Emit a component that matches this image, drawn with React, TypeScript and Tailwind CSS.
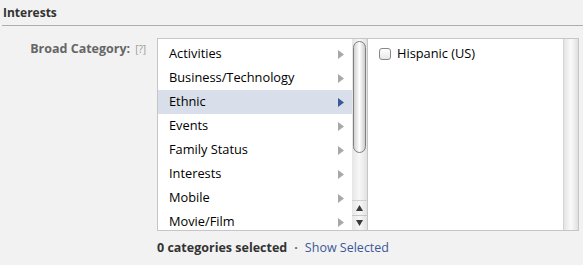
const categories = [
  'Activities',
  'Business/Technology',
  'Ethnic',
  'Events',
  'Family Status',
  'Interests',
  'Mobile',
  'Movie/Film',
]

function Arrow({ active }: { active: boolean }) {
  return (
    <svg width="6" height="9" viewBox="0 0 6 9" className={active ? 'text-[#3b5998]' : 'text-[#a8a8a8]'}>
      <path d="M0 0 L6 4.5 L0 9 Z" fill="currentColor" />
    </svg>
  )
}

function CategoryList() {
  return (
    <div className="w-[194px] h-full overflow-hidden pt-[3px]">
      {categories.map(name => {
        const active = name === 'Ethnic'
        return (
          <div
            key={name}
            className={`h-[24px] flex items-center justify-between pl-[11px] pr-[8px] text-[12.8px] text-black ${active ? 'bg-[#d8dfea]' : ''}`}
          >
            <span>{name}</span>
            <Arrow active={active} />
          </div>
        )
      })}
    </div>
  )
}

function ListScrollbar() {
  return (
    <div className="w-[16px] h-full flex flex-col bg-gradient-to-r from-[#e6e6e6] via-[#f7f7f7] to-[#e2e2e2] border-r border-[#c6c6c6]">
      <div className="flex-1 pt-[2px] px-[1px]">
        <div className="h-[112px] rounded-full border border-[#7f7f7f] bg-gradient-to-r from-[#d2d2d2] via-white to-[#cccccc]" />
      </div>
      <div className="h-[15px] flex items-center justify-center border-t border-[#d0d0d0]">
        <svg width="7" height="6" viewBox="0 0 7 6">
          <path d="M3.5 0 L7 6 L0 6 Z" fill="#3a3a3a" />
        </svg>
      </div>
      <div className="h-[15px] flex items-center justify-center border-t border-[#c8c8c8]">
        <svg width="7" height="6" viewBox="0 0 7 6">
          <path d="M0 0 L7 0 L3.5 6 Z" fill="#3a3a3a" />
        </svg>
      </div>
    </div>
  )
}

export default function App() {
  return (
    <div className="w-[583px] h-[265px] bg-[#f2f2f2] font-['Lucida_Grande','Open_Sans',sans-serif] overflow-hidden">
      <div className="pl-[3px] pt-[4px] h-[25px] text-[12px] font-bold text-[#333]">Interests</div>
      <div className="ml-[2px] h-px bg-[#adadad]" />

      <div className="flex mt-[12px]">
        <div className="w-[157px] flex justify-end items-start pr-[11px] pt-[2px]">
          <span className="text-[12.5px] font-bold text-[#666]">Broad Category:</span>
          <span className="ml-[5px] text-[10px] text-[#999] pt-[2px]">[?]</span>
        </div>

        <div>
          <div className="w-[422px] h-[193px] border border-[#c6c6c6] bg-white flex">
            <CategoryList />
            <ListScrollbar />
            <div className="flex-1 pt-[5px] pl-[11px]">
              <label className="flex items-center gap-[6px] text-[12.8px] text-black">
                <span className="w-[12px] h-[12px] rounded-[3px] border border-[#888] bg-gradient-to-b from-white to-[#e8e8e8]" />
                Hispanic (US)
              </label>
            </div>
            <div className="w-[15px] h-full bg-gradient-to-r from-[#e4e4e4] via-[#fafafa] to-[#e0e0e0] border-l border-[#d4d4d4]" />
          </div>

          <div className="pt-[8px] text-[12.5px]">
            <span className="font-bold text-[#333]">0 categories selected</span>
            <span className="mx-[7px] text-[#666] font-bold">·</span>
            <span className="text-[#3b5998]">Show Selected</span>
          </div>
        </div>
      </div>
    </div>
  )
}
